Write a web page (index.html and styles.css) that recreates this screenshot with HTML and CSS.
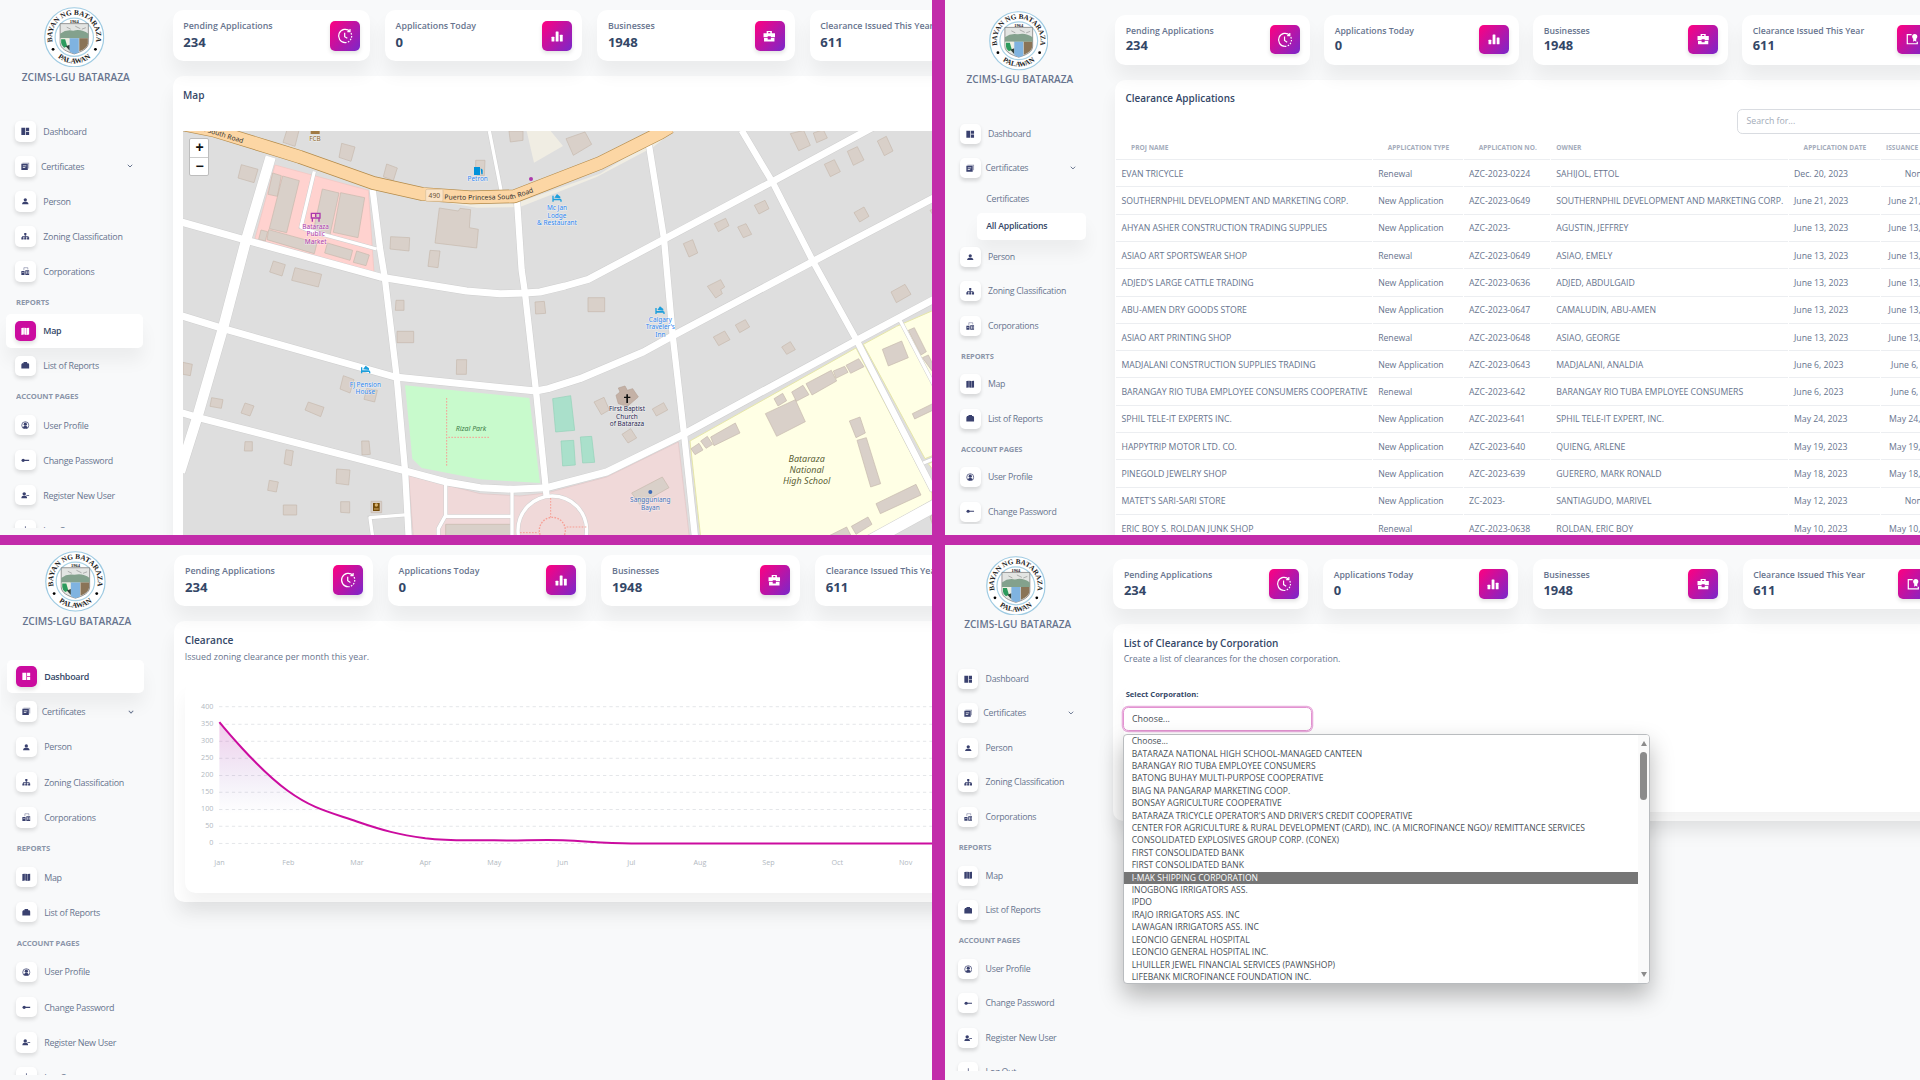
FILE: index.html
```html
<!DOCTYPE html>
<html lang="en">
<head>
<meta charset="utf-8">
<title>ZCIMS-LGU Bataraza</title>
<link rel="stylesheet" href="styles.css">
</head>
<body>
<svg class="defs" width="0" height="0" aria-hidden="true">
  <defs>
    <symbol id="i-dash" viewBox="0 0 24 24"><path d="M1 2h11v20H1zM14 2h9v9h-9zM14 13h9v9h-9z"/></symbol>
    <symbol id="i-cert" viewBox="0 0 24 24"><path fill-rule="evenodd" d="M1 5h18v17H1zM5 10v2h10v-2zM5 14v2h7v-2z"/><path d="M4 2h19v16h-2.500V4H4z" opacity=".55"/></symbol>
    <symbol id="i-person" viewBox="0 0 24 24"><circle cx="12" cy="8" r="4.600"/><path d="M3 20c0-5 4-6.500 9-6.500s9 1.500 9 6.500z"/></symbol>
    <symbol id="i-zone" viewBox="0 0 24 24"><path d="M9 3h6v6h-2v3h8v3h2v6h-6v-6h2v-1h-6v1h2v6H9v-6h2v-1H5v1h2v6H1v-6h2v-3h8V9H9z"/></symbol>
    <symbol id="i-corp" viewBox="0 0 24 24"><path fill-rule="evenodd" d="M1 11h9v11H1zM4 14v2h3v-2zM12 9h11v13H12zM15 12v7h2v-7zM19 12v7h2v-7z"/><path d="M8 9V2h11v5" fill="none" stroke="currentColor" stroke-width="1.600" opacity=".7"/></symbol>
    <symbol id="i-map" viewBox="0 0 24 24"><path d="M1 3l7-1v19l-7 1zM9 2l6 1v19l-6-1zM16 3l7-1v19l-7 1z"/></symbol>
    <symbol id="i-list" viewBox="0 0 24 24"><path d="M7 6V3h10v3h4l2 4v11H1V10l2-4z"/></symbol>
    <symbol id="i-user" viewBox="0 0 24 24"><circle cx="12" cy="12" r="10" fill="none" stroke="currentColor" stroke-width="2"/><circle cx="12" cy="9" r="4.500"/><path d="M5 19c1-4 4-5 7-5s6 1 7 5c-4 3-10 3-14 0z"/></symbol>
    <symbol id="i-key" viewBox="0 0 24 24"><circle cx="6" cy="12" r="4.500"/><path d="M6 10.300h17v3.400H6z"/></symbol>
    <symbol id="i-reg" viewBox="0 0 24 24"><circle cx="9" cy="8" r="4.800"/><path d="M1 20c0-5 3-6.500 8-6.500s8 1.500 8 6.500zM15 11h8v2.500h-8z"/></symbol>
    <symbol id="i-out" viewBox="0 0 24 24"><path d="M11 1h2v11h-2z"/></symbol>
    <symbol id="i-clock" viewBox="0 0 24 24"><g fill="none" stroke="currentColor" stroke-width="1.800"><path d="M19.500 5A10 10 0 1 0 12 22"/><path d="M12 22a10 10 0 0 0 10-10c0-2-.6-4-1.600-5.500" stroke-dasharray="2.400 2"/><path d="M11.500 7v6l4 2.500M19.500 1.500v4h-4"/></g></symbol>
    <symbol id="i-bars" viewBox="0 0 24 24"><rect x="1" y="13" width="5.500" height="9" rx="1"/><rect x="9" y="3" width="5.500" height="19" rx="1"/><rect x="17" y="9" width="5.500" height="13" rx="1"/></symbol>
    <symbol id="i-case" viewBox="0 0 24 24"><path fill-rule="evenodd" d="M7 2h10v4h6v8h-8v-2H9v2H1V6h6zM10 4v2h4V4zM2 15.500h7V18h6v-2.500h7V22H2z"/></symbol>
    <symbol id="i-badge" viewBox="0 0 24 24"><path d="M11 3H2.500v18H22v-4" fill="none" stroke="currentColor" stroke-width="2.400"/><circle cx="17" cy="7" r="5"/><path d="M14 11h6v6l-3-2-3 2z"/></symbol>
    <symbol id="i-chev" viewBox="0 0 24 24"><path d="M3 7l9 9 9-9" fill="none" stroke="currentColor" stroke-width="4"/></symbol>
    <symbol id="seal" viewBox="0 0 120 120">
      <circle cx="60" cy="60" r="58.500" fill="#fff" stroke="#9fcbe2" stroke-width="2.400"/>
      <circle cx="60" cy="60" r="38" fill="#fff" stroke="#a9d2e6" stroke-width="2.400"/>
      <path d="M32 33h56v38c0 12-14 18-28 22-14-4-28-10-28-22z" fill="#e3e5e3" stroke="#777" stroke-width="1.500"/>
      <path d="M32 53q12-9 26-6 16-4 30 6v9H32z" fill="#83a18d"/>
      <path d="M33 62h17v23q-16-6-17-14z" fill="#eef0e2"/><path d="M34 64h8l4 14-6 3q-6-5-6-10z" fill="#2c9a5c"/><path d="M43 78l8-3v12z" fill="#32413c"/>
      <path d="M51 62h18v28l-9 3-9-4z" fill="#7fb3e0"/><path d="M70 62h17v10q-1 10-17 16z" fill="#8a7457"/>
      <path d="M45 40l8 4M62 38l10 5M75 44l8-3" stroke="#999" stroke-width="1.500"/>
      <path id="seal-top" d="M20 78A44 44 0 1 1 100 78" fill="none"/>
      <path id="seal-bottom" d="M14 84A52 52 0 0 0 106 84" fill="none"/>
      <text class="seal-text"><textPath href="#seal-top" startOffset="50%">BAYAN NG BATARAZA</textPath></text>
      <text class="seal-text"><textPath href="#seal-bottom" startOffset="50%">PALAWAN</textPath></text>
      <text class="seal-year" x="60" y="32">1964</text>
      <circle cx="18" cy="84" r="2.800"/><circle cx="102" cy="84" r="2.800"/>
    </symbol>
    <linearGradient id="fade" gradientUnits="userSpaceOnUse" x1="0" y1="719" x2="0" y2="814"><stop offset="0" stop-color="#cb0c9f" stop-opacity=".22"/><stop offset="1" stop-color="#4848b0" stop-opacity="0"/></linearGradient>
  </defs>
</svg>

<div class="board">

<section class="pane"><div class="app app-map">
  <aside class="side">
    <div class="brand"><svg class="logo"><use href="#seal"/></svg><span>ZCIMS-LGU BATARAZA</span></div>
    <nav>
      <a class="item"><i><svg><use href="#i-dash"/></svg></i>Dashboard</a>
      <a class="item group"><i><svg><use href="#i-cert"/></svg></i>Certificates<svg class="chev"><use href="#i-chev"/></svg></a>
      <a class="item"><i><svg><use href="#i-person"/></svg></i>Person</a>
      <a class="item"><i><svg><use href="#i-zone"/></svg></i>Zoning Classification</a>
      <a class="item"><i><svg><use href="#i-corp"/></svg></i>Corporations</a>
      <h6>Reports</h6>
      <a class="item active"><i><svg><use href="#i-map"/></svg></i>Map</a>
      <a class="item"><i><svg><use href="#i-list"/></svg></i>List of Reports</a>
      <h6>Account pages</h6>
      <a class="item"><i><svg><use href="#i-user"/></svg></i>User Profile</a>
      <a class="item"><i><svg><use href="#i-key"/></svg></i>Change Password</a>
      <a class="item"><i><svg><use href="#i-reg"/></svg></i>Register New User</a>
      <a class="item"><i><svg><use href="#i-out"/></svg></i>Log Out</a>
    </nav>
  </aside>
  <main class="main">
    <div class="stats">
      <div class="stat"><div><p>Pending Applications</p><b>234</b></div><span class="tile"><svg class="big"><use href="#i-clock"/></svg></span></div>
      <div class="stat"><div><p>Applications Today</p><b>0</b></div><span class="tile"><svg><use href="#i-bars"/></svg></span></div>
      <div class="stat"><div><p>Businesses</p><b>1948</b></div><span class="tile"><svg><use href="#i-case"/></svg></span></div>
      <div class="stat"><div><p>Clearance Issued This Year</p><b>611</b></div><span class="tile"><svg><use href="#i-badge"/></svg></span></div>
    </div>
    <div class="card tall">
      <h2>Map</h2>
      <div class="mapbox">
        <svg class="map" viewBox="549 392 2247 1213">
          <path fill="#ffd2cf" stroke="#f3c4c0" stroke-width="2" d="M825 494L1105 570 1122 818 765 715z"/>
          <path fill="#c8facc" d="M1215 1155L1588 1193 1620 1448 1440 1437 1265 1403 1237 1375z"/>
          <path fill="#f0d9d9" stroke="#e3c5c5" stroke-width="2" d="M1226 1425L1440 1480 1560 1487 1640 1478 1820 1430 2035 1325 2068 1610 1240 1610z"/>
          <path fill="#ffffe5" stroke="#e6e6a8" stroke-width="3" d="M2070 1322L2568 1043 2796 1480V1500L2600 1610H2102zM2590 1032L2690 978 2800 930V1365L2775 1375zM2785 1390L2800 1384V1410z"/>
          <path fill="#f0ede3" d="M1580 392L1652 392 1689 437 1602 487zM1543 610L1800 520 1990 400 2020 392 1960 440 1790 530 1560 620 1430 622 1300 600z"/>
          <path class="bld" d="M862 385l35 5-12 48-36-12zM1025 429l40 11-12 43-36-12zM1160 491l32 12-12 38-30-12zM724 493l50 14-12 40-48-14zM818 518l26 8-12 62-28-6zM848 527l50 14-38 156-52-12zM967 566l50 12-28 130-50-12zM1022 577l72 15-20 120-74-16zM806 688l145 40-8 32-142-42zM783 689l20 5-7 28-20-5zM982 728l76 22-8 30-76-22zM1070 752l38 12-10 32-38-10zM820 782l36 11-10 34-37-12zM885 802l80 20-10 38-80-20zM1427 480l28 0-2 46-26-2zM1318 623L1375 632 1380 624 1412 628 1408 682 1435 687 1430 743 1305 728zM1172 709l57 3-2 40-57-6zM1290 750l30 2-6 50-30-4zM1527 392l42 0 0 28-38 5zM1698 415l57-20 20 37-55 33z"/>
          <path class="bld" d="M1188 900l24 0 0 30-26 0zM1191 993l50 0 0 34-50 0zM1370 1078l30 0-1 44-30 0zM549 1086l28 6-6 34-22-4zM635 1192l34 6-5 26-34-6zM735 1208l27 9-12 30-27-9zM925 1205l47 16-10 28-47-20zM1030 1126l32 12-12 40-30-12zM1100 1165l32 5-8 35-32-8zM735 1324l22 0 0 28-24 0zM858 1348l22 4-6 44-22-6zM1085 1322l22 0 4 40-25 2zM808 1440l27 5-6 30-26-5zM1010 1406l40 3-4 45-38-5zM850 1514l40 0 0 30-40 0zM1022 1504l27 0 0 34-27-2zM1113 1503l32 0 0 34-32 0zM1605 905l28-2 4 36-30 2zM1337 1572l195 0 0 60-195 0z"/>
          <path class="bld" d="M1764 892l50 0 0 42-50 0zM2050 730l28-12 15 40-26 12zM2143 670l34-16 10 22-32 18zM2213 680l25-10 17 32-25 10zM2263 615l32-15 12 25-30 16zM2473 492l30-14 18 36-30 15zM2542 453l30-14 20 40-32 16zM2632 422l27-14 20 44-26 14zM2371 400l40-10 20 45-35 16zM2440 398l30-10 12 25-32 14zM2562 637l30-17 15 28-28 17zM2673 875l42-23 18 30-44 25zM2122 858l40-20 12 22-12 8 5 12-20 13zM2140 1010l34-18 16 26-34 18zM2206 974l30-16 13 22-30 17zM2345 1040l26-16 15 24-26 14zM1782 1205l30-14 16 38-24 14zM1957 1226l34-19 12 22-34 18zM1866 1302l26-17 18 28-26 15zM1895 1478l92-48 20 32-88 50zM2790 630l10-4v20zM2790 1550l10 -10v40z"/>
          <path class="bld" d="M2073 1345l24-16 12 20-24 14zM2102 1322l20-14 16 24-20 12zM2132 1310l74-42 14 30-78 38zM2322 1195l26-16 12 22-26 16zM2375 1175l34-20 18 28-38 20zM2418 1150l76-40 16 32-74 42zM2500 1112l34-14 10 18-36 18zM2538 1095l38-20 16 24-40 20zM2296 1240l90-42 30 66-86 44zM2548 1262l32-12 16 48-28 14zM2571 1320l28-8 43 138-30 10zM2628 1510l120-58 15 32-122 56zM2554 1578l50-28 12 22-48 30zM2490 1605l50-25 15 30zM2647 1047l58-25 20 50-60 25zM2725 990l18-8 36 72-16 10zM2767 1072l18-8 20 40v20zM2737 1240l65-32 0 20-58 28z"/>
          <path fill="#c4b1a6" stroke="#b5a195" stroke-width="2" d="M1848 1185l12-10-5-12 20-6 7 13 16-5 17 25-33 28-27-8z"/>
          <path fill="#aae0cb" stroke="#93d1b8" stroke-width="2" d="M1658 1195l54-9 12 104-57 5zM1683 1322l38-2 5 74-38 3zM1741 1310l34-2 9 78-36 2z"/>

          <g class="casing">
            <path stroke-width="13" d="M943 513L903 680 925 690 1130 746M1468 392L1504 575M1225 1543L1110 1552 1118 1610M1337 1450V1545L1315 1585V1610M1337 1548H1535M1536 1470V1610M2700 960L2805 1160M2770 1388L2800 1376"/>
            <circle cx="1657" cy="1590" r="103" stroke-width="13"/>
            <path stroke-width="24" d="M540 664L740 720 1140 830 1400 872 1500 880 1575 878 1620 875 1695 857 1765 837 1990 718 2315 545 2620 380M540 945L670 985 1185 1130 1608 1172 1645 1165 1740 1135 1930 1055 2015 1008 2445 780 2800 593M540 1236L595 1252 1210 1410 1340 1445 1440 1462 1540 1467 1640 1462 1820 1415 2050 1302 2570 1020 2800 898"/>
            <path stroke-width="22" d="M1118 568L1140 744 1155 837 1190 1130 1215 1410 1226 1610M1551 600L1565 810 1575 878 1608 1172 1640 1490M1947 435L1992 715 2018 1005 2052 1300 2086 1620M2225 390L2320 550 2440 785 2570 1020 2800 1470"/>
            <path stroke-width="34" d="M812 470L740 713 668 987 592 1250 540 1415"/>
            <path stroke-width="40" d="M2600 1628L2810 1513"/>
          </g>
          <g class="road">
            <path stroke-width="10" d="M943 513L903 680 925 690 1130 746M1468 392L1504 575M1225 1543L1110 1552 1118 1610M1337 1450V1545L1315 1585V1610M1337 1548H1535M1536 1470V1610M2700 960L2805 1160M2770 1388L2800 1376"/>
            <circle cx="1657" cy="1590" r="103" stroke-width="10"/>
            <path stroke-width="21" d="M540 664L740 720 1140 830 1400 872 1500 880 1575 878 1620 875 1695 857 1765 837 1990 718 2315 545 2620 380M540 945L670 985 1185 1130 1608 1172 1645 1165 1740 1135 1930 1055 2015 1008 2445 780 2800 593M540 1236L595 1252 1210 1410 1340 1445 1440 1462 1540 1467 1640 1462 1820 1415 2050 1302 2570 1020 2800 898"/>
            <path stroke-width="19" d="M1118 568L1140 744 1155 837 1190 1130 1215 1410 1226 1610M1551 600L1565 810 1575 878 1608 1172 1640 1490M1947 435L1992 715 2018 1005 2052 1300 2086 1620M2225 390L2320 550 2440 785 2570 1020 2800 1470"/>
            <path stroke-width="31" d="M812 470L740 713 668 987 592 1250 540 1415"/>
            <path stroke-width="37" d="M2600 1628L2810 1513"/>
          </g>
          <path class="highway-edge" d="M540 370L640 390 816 444 900 470 1120 548 1267 581 1412 591 1543 588 1620 558 1800 488 1980 398 2010 380"/>
          <path class="highway" d="M540 370L640 390 816 444 900 470 1120 548 1267 581 1412 591 1543 588 1620 558 1800 488 1980 398 2010 380"/>
          <path d="M1340 1193V1398M1345 1311H1470M1652 1493v58M1700 1580h60M1560 1597h55" fill="none" stroke="#f79f95" stroke-width="3" stroke-dasharray="5 4"/>
          <circle cx="1657" cy="1590" r="39" fill="none" stroke="#f79f95" stroke-width="4" stroke-dasharray="5 4"/>

          <path id="road-west" d="M596 388L748 435" fill="none"/>
          <path id="road-east" d="M1333 597L1420 599 1540 596 1580 583 1680 546" fill="none"/>
          <text class="t road-name"><textPath href="#road-west">sa South Road</textPath></text>
          <text class="t road-name" textLength="272"><textPath href="#road-east">Puerto Princesa South Road</textPath></text>
          <rect x="1277" y="567" width="52" height="36" rx="4" fill="#fbe3c6" stroke="#d6bd97" stroke-width="2"/>
          <text class="t shield" x="1303" y="592">490</text>
          <path d="M932 390h27v11h-27z" fill="#a07a45"/><text class="t brown" x="945" y="422">FCB</text>
          <path d="M1422 500h18v24h-18zM1442 504l6 4v14h-4z" fill="#0092da"/><text class="t blue" x="1433" y="543">Petron</text>
          <g fill="none" stroke="#ac39ac" stroke-width="4"><path d="M934 639h26v14h-26zM937 652v12M957 652v12M947 640v10"/></g>
          <text class="t purple" x="947" y="686">Bataraza<tspan x="947" dy="22.500">Public</tspan><tspan x="947" dy="22.500">Market</tspan></text>
          <circle cx="1593" cy="536" r="6" fill="#ac39ac"/>
          <g fill="#1c9fdc"><path id="bed" d="M1657 604v-18h4v9h19q5 0 5 5v4h-4v-4h-20v4zM1663 592l8-11 10 8v5z"/><use href="#bed" x="309" y="337"/><use href="#bed" x="-574" y="515"/></g>
          <text class="t blue" x="1671" y="630">Mc Jan<tspan x="1671" dy="22.500">Lodge</tspan><tspan x="1671" dy="22.500">&amp; Restaurant</tspan></text>
          <text class="t blue" x="1981" y="965">Calgary<tspan x="1981" dy="22.500">Traveler's</tspan><tspan x="1981" dy="22.500">Inn</tspan></text>
          <text class="t blue" x="1096" y="1160">FJ Pension<tspan x="1096" dy="22.500">House</tspan></text>
          <path d="M1119 1508h20v24h-20z" fill="#734a08"/><circle cx="1129" cy="1514" r="5" fill="#d9b06a"/><path d="M1122 1526h14" stroke="#d9b06a" stroke-width="3"/>
          <text class="t park" x="1413" y="1292">Rizal Park</text>
          <path d="M1879 1182h5v7h7v4h-7v15h-5v-15h-7v-4h7z" fill="#111"/>
          <text class="t church" x="1881" y="1233">First Baptist<tspan x="1881" dy="22.500">Church</tspan><tspan x="1881" dy="22.500">of Bataraza</tspan></text>
          <circle cx="1951" cy="1475" r="6" fill="#3d6ab5"/>
          <text class="t hall" x="1951" y="1506">Sangguniang<tspan x="1951" dy="22.500">Bayan</tspan></text>
          <text class="t school" x="2420" y="1384">Bataraza<tspan x="2420" dy="33.500">National</tspan><tspan x="2420" dy="33.500">High School</tspan></text>
        </svg>
        <div class="zoomer"><span>+</span><span>−</span></div>
      </div>
    </div>
  </main>
</div></section>

<section class="pane"><div class="app app-list">
  <aside class="side">
    <div class="brand"><svg class="logo"><use href="#seal"/></svg><span>ZCIMS-LGU BATARAZA</span></div>
    <nav>
      <a class="item"><i><svg><use href="#i-dash"/></svg></i>Dashboard</a>
      <a class="item group"><i><svg><use href="#i-cert"/></svg></i>Certificates<svg class="chev"><use href="#i-chev"/></svg></a>
      <a class="sub">Certificates</a>
      <a class="sub active">All Applications</a>
      <a class="item"><i><svg><use href="#i-person"/></svg></i>Person</a>
      <a class="item"><i><svg><use href="#i-zone"/></svg></i>Zoning Classification</a>
      <a class="item"><i><svg><use href="#i-corp"/></svg></i>Corporations</a>
      <h6>Reports</h6>
      <a class="item"><i><svg><use href="#i-map"/></svg></i>Map</a>
      <a class="item"><i><svg><use href="#i-list"/></svg></i>List of Reports</a>
      <h6>Account pages</h6>
      <a class="item"><i><svg><use href="#i-user"/></svg></i>User Profile</a>
      <a class="item"><i><svg><use href="#i-key"/></svg></i>Change Password</a>
    </nav>
  </aside>
  <main class="main">
    <div class="stats">
      <div class="stat"><div><p>Pending Applications</p><b>234</b></div><span class="tile"><svg class="big"><use href="#i-clock"/></svg></span></div>
      <div class="stat"><div><p>Applications Today</p><b>0</b></div><span class="tile"><svg><use href="#i-bars"/></svg></span></div>
      <div class="stat"><div><p>Businesses</p><b>1948</b></div><span class="tile"><svg><use href="#i-case"/></svg></span></div>
      <div class="stat"><div><p>Clearance Issued This Year</p><b>611</b></div><span class="tile"><svg><use href="#i-badge"/></svg></span></div>
    </div>
    <div class="card tall">
      <h2>Clearance Applications</h2>
      <div class="search">Search for...</div>
      <table class="list">
        <thead><tr><th>Proj Name</th><th>Application Type</th><th>Application No.</th><th class="flush">Owner</th><th>Application Date</th><th class="flush">Issuance Date</th></tr></thead>
        <tbody>
          <tr><td>EVAN TRICYCLE</td><td>Renewal</td><td>AZC-2023-0224</td><td>SAHIJOL, ETTOL</td><td>Dec. 20, 2023</td><td>None</td></tr>
          <tr><td>SOUTHERNPHIL DEVELOPMENT AND MARKETING CORP.</td><td>New Application</td><td>AZC-2023-0649</td><td>SOUTHERNPHIL DEVELOPMENT AND MARKETING CORP.</td><td>June 21, 2023</td><td>June 21, 2023</td></tr>
          <tr><td>AHYAN ASHER CONSTRUCTION TRADING SUPPLIES</td><td>New Application</td><td>AZC-2023-</td><td>AGUSTIN, JEFFREY</td><td>June 13, 2023</td><td>June 13, 2023</td></tr>
          <tr><td>ASIAO ART SPORTSWEAR SHOP</td><td>Renewal</td><td>AZC-2023-0649</td><td>ASIAO, EMELY</td><td>June 13, 2023</td><td>June 13, 2023</td></tr>
          <tr><td>ADJED'S LARGE CATTLE TRADING</td><td>New Application</td><td>AZC-2023-0636</td><td>ADJED, ABDULGAID</td><td>June 13, 2023</td><td>June 13, 2023</td></tr>
          <tr><td>ABU-AMEN DRY GOODS STORE</td><td>New Application</td><td>AZC-2023-0647</td><td>CAMALUDIN, ABU-AMEN</td><td>June 13, 2023</td><td>June 13, 2023</td></tr>
          <tr><td>ASIAO ART PRINTING SHOP</td><td>Renewal</td><td>AZC-2023-0648</td><td>ASIAO, GEORGE</td><td>June 13, 2023</td><td>June 13, 2023</td></tr>
          <tr><td>MADJALANI CONSTRUCTION SUPPLIES TRADING</td><td>New Application</td><td>AZC-2023-0643</td><td>MADJALANI, ANALDIA</td><td>June 6, 2023</td><td>June 6, 2023</td></tr>
          <tr><td>BARANGAY RIO TUBA EMPLOYEE CONSUMERS COOPERATIVE</td><td>Renewal</td><td>AZC-2023-642</td><td>BARANGAY RIO TUBA EMPLOYEE CONSUMERS</td><td>June 6, 2023</td><td>June 6, 2023</td></tr>
          <tr><td>SPHIL TELE-IT EXPERTS INC.</td><td>New Application</td><td>AZC-2023-641</td><td>SPHIL TELE-IT EXPERT, INC.</td><td>May 24, 2023</td><td>May 24, 2023</td></tr>
          <tr><td>HAPPYTRIP MOTOR LTD. CO.</td><td>New Application</td><td>AZC-2023-640</td><td>QUIENG, ARLENE</td><td>May 19, 2023</td><td>May 19, 2023</td></tr>
          <tr><td>PINEGOLD JEWELRY SHOP</td><td>New Application</td><td>AZC-2023-639</td><td>GUERERO, MARK RONALD</td><td>May 18, 2023</td><td>May 18, 2023</td></tr>
          <tr><td>MATET'S SARI-SARI STORE</td><td>New Application</td><td>ZC-2023-</td><td>SANTIAGUDO, MARIVEL</td><td>May 12, 2023</td><td>None</td></tr>
          <tr><td>ERIC BOY S. ROLDAN JUNK SHOP</td><td>Renewal</td><td>AZC-2023-0638</td><td>ROLDAN, ERIC BOY</td><td>May 10, 2023</td><td>May 10, 2023</td></tr>
        </tbody>
      </table>
    </div>
  </main>
</div></section>

<section class="pane"><div class="app app-chart">
  <aside class="side">
    <div class="brand"><svg class="logo"><use href="#seal"/></svg><span>ZCIMS-LGU BATARAZA</span></div>
    <nav>
      <a class="item active"><i><svg><use href="#i-dash"/></svg></i>Dashboard</a>
      <a class="item group"><i><svg><use href="#i-cert"/></svg></i>Certificates<svg class="chev"><use href="#i-chev"/></svg></a>
      <a class="item"><i><svg><use href="#i-person"/></svg></i>Person</a>
      <a class="item"><i><svg><use href="#i-zone"/></svg></i>Zoning Classification</a>
      <a class="item"><i><svg><use href="#i-corp"/></svg></i>Corporations</a>
      <h6>Reports</h6>
      <a class="item"><i><svg><use href="#i-map"/></svg></i>Map</a>
      <a class="item"><i><svg><use href="#i-list"/></svg></i>List of Reports</a>
      <h6>Account pages</h6>
      <a class="item"><i><svg><use href="#i-user"/></svg></i>User Profile</a>
      <a class="item"><i><svg><use href="#i-key"/></svg></i>Change Password</a>
      <a class="item"><i><svg><use href="#i-reg"/></svg></i>Register New User</a>
      <a class="item"><i><svg><use href="#i-out"/></svg></i>Log Out</a>
    </nav>
  </aside>
  <main class="main">
    <div class="stats">
      <div class="stat"><div><p>Pending Applications</p><b>234</b></div><span class="tile"><svg class="big"><use href="#i-clock"/></svg></span></div>
      <div class="stat"><div><p>Applications Today</p><b>0</b></div><span class="tile"><svg><use href="#i-bars"/></svg></span></div>
      <div class="stat"><div><p>Businesses</p><b>1948</b></div><span class="tile"><svg><use href="#i-case"/></svg></span></div>
      <div class="stat"><div><p>Clearance Issued This Year</p><b>611</b></div><span class="tile"><svg><use href="#i-badge"/></svg></span></div>
    </div>
    <div class="card">
      <h2>Clearance</h2>
      <p class="lead">Issued zoning clearance per month this year.</p>
      <div class="inner chartbox">
        <svg class="chart" viewBox="185 682 807 211">
          <g class="grid"><path d="M219 706.700H992M219 724.300H992M219 741.300H992M219 758.300H992M219 775.500H992M219 792.300H992M219 809.500H992M219 826.300H992M219 843.500H992"/></g>
          <path fill="url(#fade)" d="M219.300 722.200C219.300 722.200 257 768.700 288 791 312 808.400 328.300 811.800 356.700 821.500 383.300 830.600 398 834.500 425.300 838.300 453 841.500 466 840 494 840.400 521 840.900 535 839.700 562.700 840.300 590 841.500 604 843.500 631.300 843.500H219.300z"/>
          <path class="curve" d="M219.300 722.200C219.300 722.200 257 768.700 288 791 312 808.400 328.300 811.800 356.700 821.500 383.300 830.600 398 834.500 425.300 838.300 453 841.500 466 840 494 840.400 521 840.900 535 839.700 562.700 840.300 590 841.500 604 843.500 631.300 843.500H992"/>
          <g class="ticks end"><text x="213.300" y="708.800">400</text><text x="213.300" y="726.300">350</text><text x="213.300" y="742.800">300</text><text x="213.300" y="760.300">250</text><text x="213.300" y="777.500">200</text><text x="213.300" y="794.300">150</text><text x="213.300" y="811.500">100</text><text x="213.300" y="828.300">50</text><text x="213.300" y="845.500">0</text></g>
          <g class="ticks"><text x="219.300" y="865.300">Jan</text><text x="288.300" y="865.300">Feb</text><text x="356.900" y="865.300">Mar</text><text x="425.300" y="865.300">Apr</text><text x="494.200" y="865.300">May</text><text x="562.700" y="865.300">Jun</text><text x="631.300" y="865.300">Jul</text><text x="700" y="865.300">Aug</text><text x="768.500" y="865.300">Sep</text><text x="837.300" y="865.300">Oct</text><text x="905.700" y="865.300">Nov</text></g>
        </svg>
      </div>
    </div>
  </main>
</div></section>

<section class="pane"><div class="app app-report">
  <aside class="side">
    <div class="brand"><svg class="logo"><use href="#seal"/></svg><span>ZCIMS-LGU BATARAZA</span></div>
    <nav>
      <a class="item"><i><svg><use href="#i-dash"/></svg></i>Dashboard</a>
      <a class="item group"><i><svg><use href="#i-cert"/></svg></i>Certificates<svg class="chev"><use href="#i-chev"/></svg></a>
      <a class="item"><i><svg><use href="#i-person"/></svg></i>Person</a>
      <a class="item"><i><svg><use href="#i-zone"/></svg></i>Zoning Classification</a>
      <a class="item"><i><svg><use href="#i-corp"/></svg></i>Corporations</a>
      <h6>Reports</h6>
      <a class="item"><i><svg><use href="#i-map"/></svg></i>Map</a>
      <a class="item"><i><svg><use href="#i-list"/></svg></i>List of Reports</a>
      <h6>Account pages</h6>
      <a class="item"><i><svg><use href="#i-user"/></svg></i>User Profile</a>
      <a class="item"><i><svg><use href="#i-key"/></svg></i>Change Password</a>
      <a class="item"><i><svg><use href="#i-reg"/></svg></i>Register New User</a>
      <a class="item"><i><svg><use href="#i-out"/></svg></i>Log Out</a>
    </nav>
  </aside>
  <main class="main">
    <div class="stats">
      <div class="stat"><div><p>Pending Applications</p><b>234</b></div><span class="tile"><svg class="big"><use href="#i-clock"/></svg></span></div>
      <div class="stat"><div><p>Applications Today</p><b>0</b></div><span class="tile"><svg><use href="#i-bars"/></svg></span></div>
      <div class="stat"><div><p>Businesses</p><b>1948</b></div><span class="tile"><svg><use href="#i-case"/></svg></span></div>
      <div class="stat"><div><p>Clearance Issued This Year</p><b>611</b></div><span class="tile"><svg><use href="#i-badge"/></svg></span></div>
    </div>
    <div class="card">
      <h2>List of Clearance by Corporation</h2>
      <p class="lead">Create a list of clearances for the chosen corporation.</p>
      <div class="inner formbox">
        <label>Select Corporation:</label>
        <div class="select">Choose...
          <div class="menu">
            <ul>
              <li>Choose...</li>
              <li>BATARAZA NATIONAL HIGH SCHOOL-MANAGED CANTEEN</li>
              <li>BARANGAY RIO TUBA EMPLOYEE CONSUMERS</li>
              <li>BATONG BUHAY MULTI-PURPOSE COOPERATIVE</li>
              <li>BIAG NA PANGARAP MARKETING COOP.</li>
              <li>BONSAY AGRICULTURE COOPERATIVE</li>
              <li>BATARAZA TRICYCLE OPERATOR'S AND DRIVER'S CREDIT COOPERATIVE</li>
              <li>CENTER FOR AGRICULTURE &amp; RURAL DEVELOPMENT (CARD), INC. (A MICROFINANCE NGO)/ REMITTANCE SERVICES</li>
              <li>CONSOLIDATED EXPLOSIVES GROUP CORP. (CONEX)</li>
              <li>FIRST CONSOLIDATED BANK</li>
              <li>FIRST CONSOLIDATED BANK</li>
              <li class="hover">I-MAK SHIPPING CORPORATION</li>
              <li>INOGBONG IRRIGATORS ASS.</li>
              <li>IPDO</li>
              <li>IRAJO IRRIGATORS ASS. INC</li>
              <li>LAWAGAN IRRIGATORS ASS. INC</li>
              <li>LEONCIO GENERAL HOSPITAL</li>
              <li>LEONCIO GENERAL HOSPITAL INC.</li>
              <li>LHUILLER JEWEL FINANCIAL SERVICES (PAWNSHOP)</li>
              <li>LIFEBANK MICROFINANCE FOUNDATION INC.</li>
            </ul>
            <div class="bar"><b class="up"></b><b class="thumb"></b><b class="down"></b></div>
          </div>
        </div>
        <div class="submit"></div>
      </div>
    </div>
  </main>
</div></section>

</div>
</body>
</html>
```
FILE: styles.css
```css
* { box-sizing: border-box; }
body { margin: 0; font-family: "Open Sans", "Noto Sans", sans-serif; color: #67748e; }
h2, h6, p, ul { margin: 0; padding: 0; }
svg { display: block; flex: none; }
.defs { position: absolute; }

/* four application windows separated by magenta bars */
.board { width: 1920px; height: 1080px; display: grid; grid-template: 535px 535px / 932px 975px; gap: 10px 13px; background: #c22caa; overflow: hidden; }
.pane { overflow: hidden; background: #f8f9fa; min-width: 0; min-height: 0; display: flow-root; }
.app { display: flex; width: 1060px; height: 560px; }
.app-list { zoom: .9845; margin: 4.500px 0 0 .3px; }
.app-chart { zoom: 1.006; margin: -.7px 0 0 .6px; }
.app-report { zoom: .988; margin: 3.900px 0 0 -2.200px; }

/* sidebar */
.side { width: 172.700px; height: 528px; overflow: hidden; flex: none; }
.brand { height: 114px; padding-top: 6.800px; width: 148.500px; display: flex; flex-direction: column; align-items: center; font-size: 10.150px; font-weight: 600; line-height: 14px; white-space: nowrap; }
.brand span { margin: 2.300px 0 0 3px; }
.logo { width: 60.500px; height: 60.500px; }
.seal-text { font: bold 14.500px "Liberation Serif", serif; fill: #222; text-anchor: middle; }
.seal-year { font: bold 9px "Liberation Serif", serif; fill: #222; text-anchor: middle; }
.side nav { display: flex; flex-direction: column; }
.item { display: flex; align-items: center; gap: 7.300px; flex: none; width: 136.700px; height: 33.400px; margin: .8px 0 .8px 6px; padding-left: 9px; border-radius: 5px; font-size: 8.900px; white-space: nowrap; letter-spacing: -.26px; }
.item i { width: 21px; height: 20.400px; flex: none; border-radius: 5px; background: #fff; color: #3a416f; box-shadow: 0 2.500px 4px rgba(0,0,0,.13); display: flex; align-items: center; justify-content: center; }
.item i svg { width: 8.600px; height: 8.600px; fill: currentColor; }
.item.group { gap: 4.900px; }
.chev { width: 6px; height: 6px; margin: 0 10px 0 auto; color: #67748e; }
.active { background: #fff; color: #344767; font-weight: 600; box-shadow: 0 13px 17px rgba(0,0,0,.05); }
.item.active i { background: #cb0c9f; color: #fff; }
.side h6 { flex: none; height: 24.400px; padding: 5px 0 0 16px; font-size: 7.650px; line-height: 16.500px; font-weight: 700; text-transform: uppercase; opacity: .75; letter-spacing: -.1px; }
.sub { flex: none; display: flex; align-items: center; margin-left: 31.900px; width: 110.700px; height: 27.550px; padding-left: 9.800px; border-radius: 5px; font-size: 8.900px; letter-spacing: -.26px; }

/* summary cards */
.main { flex: 1; min-width: 0; padding-top: 10.300px; }
.stats { display: flex; gap: 15px; margin-bottom: 15px; }
.stat { flex: 0 0 197.300px; height: 51px; padding: 0 10px 0 10.600px; background: #fff; border-radius: 10.500px; box-shadow: 0 13px 17.700px rgba(0,0,0,.055); display: flex; align-items: center; justify-content: space-between; white-space: nowrap; }
.stat p { font-size: 8.830px; font-weight: 600; line-height: 13px; margin-top: .4px; }
.stat b { display: block; font-size: 13.100px; line-height: 18px; color: #344767; }
.tile { width: 30px; height: 30px; border-radius: 5px; background: linear-gradient(310deg, #7928ca, #ff0080); color: #fff; box-shadow: 0 2.600px 4.600px -.6px rgba(0,0,0,.12); display: flex; align-items: center; justify-content: center; }
.tile svg { width: 12.500px; height: 12.500px; fill: currentColor; }
.tile svg.big { width: 16px; height: 16px; }

/* content card */
.card { background: #fff; border-radius: 10.500px; box-shadow: 0 13px 17.700px rgba(0,0,0,.06); padding: 11.700px 10.300px 9.600px; width: 860px; }
.card.tall { height: 480px; }
.card h2 { font-size: 10.120px; font-weight: 600; line-height: 15px; color: #344767; }
.lead { font-size: 8.820px; line-height: 14px; margin-top: 2.300px; }
.inner { margin-top: 17.300px; border-radius: 10.500px; background: #fff; box-shadow: 0 13px 17.700px rgba(0,0,0,.05); }

/* street map */
.mapbox { position: relative; margin-top: 27.700px; width: 749px; height: 404.330px; background: #dedede; }
.map { width: 749px; height: 404.330px; }
.bld { fill: #d9d0c9; stroke: #c6b8ac; stroke-width: 2; }
.casing { fill: none; stroke: #cfcfcf; }
.road { fill: none; stroke: #fff; stroke-linejoin: round; }
.highway-edge { fill: none; stroke: #b48b4a; stroke-width: 41; stroke-linejoin: round; }
.highway { fill: none; stroke: #fcd6a4; stroke-width: 37; stroke-linejoin: round; }
.t { font-family: "Noto Sans", sans-serif; font-size: 19.500px; text-anchor: middle; stroke: rgba(255,255,255,.55); stroke-width: 3px; paint-order: stroke; }
.road-name { text-anchor: start; font-size: 20.500px; fill: #333; stroke: none; }
.shield { font-size: 20px; fill: #6b5136; stroke: none; }
.brown { fill: #8a6328; }
.blue { fill: #2d86f0; }
.purple { fill: #ac39ac; }
.church { fill: #26264f; }
.hall { fill: #4470b8; }
.park { fill: #3d7d47; font-style: italic; font-size: 21px; stroke: none; }
.school { fill: #5c5f2a; font-style: italic; font-size: 27px; }
.zoomer { position: absolute; left: 6.500px; top: 7.500px; width: 20px; border: 1px solid #bdbdbd; border-radius: 2px; background: #fff; }
.zoomer span { display: block; height: 18px; font: bold 14px/17px "Liberation Sans", sans-serif; color: #111; text-align: center; }
.zoomer span + span { border-top: 1px solid #ccc; }

/* applications table */
.search { margin: 3.300px 0 0 621.500px; width: 210px; height: 25.400px; padding: 0 8.400px; border: 1px solid #d9dce1; border-radius: 5.300px; font-size: 8.900px; line-height: 23.400px; color: #a3abb8; }
.list { display: block; margin: 7.900px -10px 0; }
.list thead, .list tbody { display: block; }
.list tr { display: grid; grid-template-columns: 260.400px 91.400px 87.600px 240.500px 92.400px 71px; gap: 1px; height: 27.730px; }
.list thead tr { height: 18.600px; }
.list td, .list th { border-bottom: 1px solid #eceef1; white-space: nowrap; text-align: left; font-weight: 400; }
.list td { padding: 5.800px 0 0 5.300px; font-size: 8.860px; line-height: 18px; letter-spacing: -.03px; }
.list td:first-child { padding-left: 6px; }
.list td:last-child { padding-left: 0; text-align: center; }
.list th { padding: 0 0 0 15px; font-size: 6.700px; line-height: 13px; font-weight: 700; text-transform: uppercase; color: #a4acbb; }
.list th:first-child { padding-left: 15.700px; }
.list th.flush { padding-left: 5.300px; }

/* chart */
.chartbox { height: 209.800px; }
.chart { width: 802.200px; height: 209.700px; overflow: hidden; }
.grid { stroke: #e4e6e9; stroke-width: 1; stroke-dasharray: 3.300 3.100; }
.curve { fill: none; stroke: #cb0c9f; stroke-width: 2; }
.ticks { font-size: 7.200px; fill: #b2b9bf; text-anchor: middle; }
.ticks.end { text-anchor: end; }

/* report form */
.formbox { height: 129.500px; }
.formbox label { display: block; padding: 5px 0 0 2.100px; font-size: 7.700px; line-height: 11px; font-weight: 700; color: #344767; }
.select { position: relative; margin: 7.300px 0 0 -.3px; width: 191px; height: 24.200px; padding: 0 7.700px; border: 1px solid #e293d0; border-radius: 5.300px; box-shadow: 0 0 0 1.300px #e9aedd; font-size: 9px; line-height: 22.200px; color: #495057; }
.menu { position: absolute; z-index: 2; left: -1px; top: 26.500px; width: 533.500px; height: 252.800px; display: flex; justify-content: space-between; background: #fff; border: 1px solid #b9bcbf; border-radius: 4px; overflow: hidden; box-shadow: 0 12px 24px rgba(0,0,0,.28); font-size: 8.650px; }
.menu ul { list-style: none; flex: 1; margin-top: .3px; }
.menu li { height: 12.570px; padding-left: 7.400px; line-height: 12.570px; white-space: nowrap; }
.menu li.hover { background: #767676; color: #fff; }
.bar { width: 11.500px; background: #fafafa; display: flex; flex-direction: column; align-items: center; padding: 6px 0; }
.up, .down { border: 4px solid transparent; width: 0; height: 0; }
.up { border-top: 0; border-bottom: 6px solid #8b8b8b; }
.down { border-bottom: 0; border-top: 6px solid #8b8b8b; margin-top: auto; }
.thumb { width: 7px; height: 48.500px; margin-top: 6.500px; border-radius: 4px; background: #8b8b8b; }
.submit { margin-top: 28.200px; width: 70px; height: 20px; margin-left: -.8px; border-radius: 4px; background: #cb0c9f; }
```
